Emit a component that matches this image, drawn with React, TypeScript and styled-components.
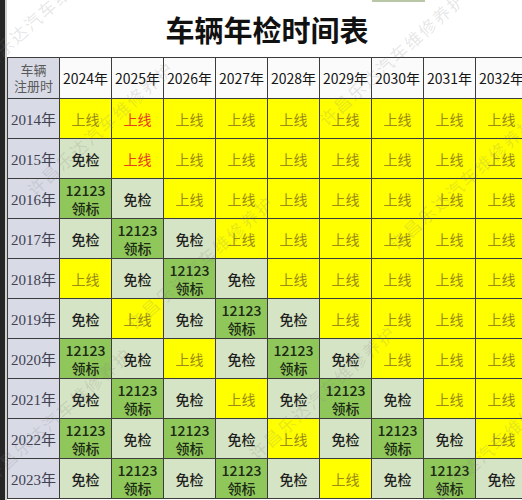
import React from 'react';
import styled, { createGlobalStyle } from 'styled-components';

const GlobalStyle = createGlobalStyle`
    html, body {
        margin: 0;
        padding: 0;
        background: #fff;
    }
    body {
        font-family: "Noto Sans CJK SC", "Noto Sans", sans-serif;
    }
`;

type Kind = 'up' | 'hot' | 'free' | 'tag';

const fills: Record<Kind, string> = {
    up: '#ffff00',
    hot: '#ffff00',
    free: '#d5e4c4',
    tag: '#8fc75b',
};

const inks: Record<Kind, string> = {
    up: '#9a8a16',
    hot: '#e53d1f',
    free: '#1e1e1e',
    tag: '#1b2915',
};

const Page = styled.div`
    position: relative;
    display: flex;
    width: 522px;
    height: 500px;
    overflow: hidden;
    background: #fff;
`;

const EdgeStrip = styled.div`
    flex: 0 0 5px;
    background: #262626;
    border-right: 2px solid #cfcfcf;
`;

const Sheet = styled.div`
    flex: 0 0 auto;
    display: flex;
    flex-direction: column;
`;

const Title = styled.h1`
    margin: 0;
    height: 57px;
    display: flex;
    align-items: center;
    justify-content: center;
    font-size: 29px;
    font-weight: 700;
    color: #111;
`;

const Table = styled.div`
    display: grid;
    grid-template-columns: repeat(10, 51px);
    grid-template-rows: 40px repeat(10, 39px);
    gap: 1px;
    padding: 1px 0 1px 1px;
    background: #3c3c3c;
`;

const CornerCell = styled.div`
    display: flex;
    flex-direction: column;
    align-items: center;
    justify-content: center;
    background: #d8dae6;
    color: #5a5a5a;
    font-size: 13px;
    line-height: 16px;
`;

const YearHead = styled.div`
    display: flex;
    align-items: center;
    justify-content: center;
    background: #fbfbfb;
    color: #151515;
    font-size: 14px;
`;

const RowHead = styled.div`
    display: flex;
    align-items: center;
    justify-content: center;
    background: #d8dae6;
    color: #404050;
    font-family: "Liberation Serif", "Noto Sans CJK SC", serif;
    font-size: 15px;
`;

const Cell = styled.div<{ $kind: Kind }>`
    display: flex;
    flex-direction: column;
    align-items: center;
    justify-content: center;
    background: ${p => fills[p.$kind]};
    color: ${p => inks[p.$kind]};
    font-size: 14px;
    line-height: 18px;
    font-weight: ${p => (p.$kind === 'free' || p.$kind === 'tag' ? 500 : 400)};
`;

const Watermark = styled.span<{ $x: number; $y: number }>`
    position: absolute;
    left: ${p => p.$x}px;
    top: ${p => p.$y}px;
    transform: translate(-50%, -50%) rotate(-42deg);
    font-size: 17px;
    letter-spacing: 2px;
    white-space: nowrap;
    color: rgba(130, 130, 130, 0.2);
    pointer-events: none;
`;

const TopTab = styled.div`
    position: absolute;
    left: 372px;
    top: 0;
    width: 53px;
    height: 2px;
    background: #b9c7a6;
`;

const years = [2024, 2025, 2026, 2027, 2028, 2029, 2030, 2031, 2032];

// U 上线, R 上线(红), F 免检, T 12123领标
const schedule: [number, string][] = [
    [2014, 'URUUUUUUU'],
    [2015, 'FRUUUUUUU'],
    [2016, 'TFUUUUUUU'],
    [2017, 'FTFUUUUUU'],
    [2018, 'UFTFUUUUU'],
    [2019, 'FUFTFUUUU'],
    [2020, 'TFUFTFUUU'],
    [2021, 'FTFUFTFUU'],
    [2022, 'TFTFUFTFU'],
    [2023, 'FTFTFUFTF'],
];

const kindOf: Record<string, Kind> = { U: 'up', R: 'hot', F: 'free', T: 'tag' };

const marks = [
    { x: 40, y: 14 },
    { x: 100, y: 128 },
    { x: 392, y: 58 },
    { x: 200, y: 262 },
    { x: 462, y: 182 },
    { x: 322, y: 392 },
    { x: 58, y: 414 },
    { x: 492, y: 446 },
];

const CellBody = ({ kind }: { kind: Kind }) => {
    if (kind === 'tag') {
        return <>
            <span>12123</span>
            <span>领标</span>
        </>;
    }
    return <span>{kind === 'free' ? '免检' : '上线'}</span>;
};

export default function App() {
    return <>
        <GlobalStyle />
        <Page>
            <EdgeStrip />
            <Sheet>
                <Title>车辆年检时间表</Title>
                <Table>
                    <CornerCell>
                        <span>车辆</span>
                        <span>注册时</span>
                    </CornerCell>
                    {years.map(y => <YearHead key={y}>{y}年</YearHead>)}
                    {schedule.map(([year, row]) => (
                        <React.Fragment key={year}>
                            <RowHead>{year}年</RowHead>
                            {row.split('').map((c, i) => (
                                <Cell key={i} $kind={kindOf[c]}>
                                    <CellBody kind={kindOf[c]} />
                                </Cell>
                            ))}
                        </React.Fragment>
                    ))}
                </Table>
            </Sheet>
            <TopTab />
            {marks.map((m, i) => (
                <Watermark key={i} $x={m.x} $y={m.y}>许昌乐达汽车维修养护</Watermark>
            ))}
        </Page>
    </>;
}
